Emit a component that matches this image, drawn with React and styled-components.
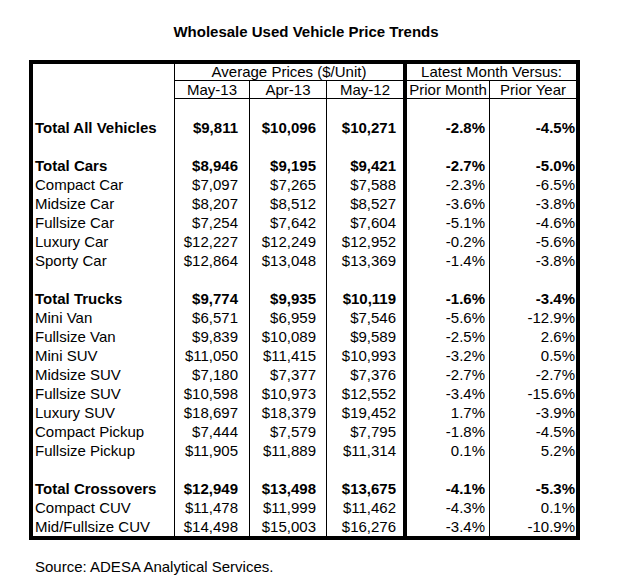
import React from "react";
import styled, { createGlobalStyle } from "styled-components";

const GlobalStyle = createGlobalStyle`
  body {
    margin: 0;
    background: #fff;
    color: #000;
    font-family: "Liberation Sans", Arial, sans-serif;
  }
`;

// column widths include the cell's right rule
const columns = [
  { w: 142, pad: 11, rule: 1 },
  { w: 75, pad: 11, rule: 1 },
  { w: 77, pad: 10, rule: 1 },
  { w: 80, pad: 7, rule: 4 },
  { w: 83, pad: 4, rule: 1 },
  { w: 86, pad: 1, rule: 0 },
];

const rows = [
  null,
  ["Total All Vehicles", "$9,811", "$10,096", "$10,271", "-2.8%", "-4.5%", true],
  null,
  ["Total Cars", "$8,946", "$9,195", "$9,421", "-2.7%", "-5.0%", true],
  ["Compact Car", "$7,097", "$7,265", "$7,588", "-2.3%", "-6.5%"],
  ["Midsize Car", "$8,207", "$8,512", "$8,527", "-3.6%", "-3.8%"],
  ["Fullsize Car", "$7,254", "$7,642", "$7,604", "-5.1%", "-4.6%"],
  ["Luxury Car", "$12,227", "$12,249", "$12,952", "-0.2%", "-5.6%"],
  ["Sporty Car", "$12,864", "$13,048", "$13,369", "-1.4%", "-3.8%"],
  null,
  ["Total Trucks", "$9,774", "$9,935", "$10,119", "-1.6%", "-3.4%", true],
  ["Mini Van", "$6,571", "$6,959", "$7,546", "-5.6%", "-12.9%"],
  ["Fullsize Van", "$9,839", "$10,089", "$9,589", "-2.5%", "2.6%"],
  ["Mini SUV", "$11,050", "$11,415", "$10,993", "-3.2%", "0.5%"],
  ["Midsize SUV", "$7,180", "$7,377", "$7,376", "-2.7%", "-2.7%"],
  ["Fullsize SUV", "$10,598", "$10,973", "$12,552", "-3.4%", "-15.6%"],
  ["Luxury SUV", "$18,697", "$18,379", "$19,452", "1.7%", "-3.9%"],
  ["Compact Pickup", "$7,444", "$7,579", "$7,795", "-1.8%", "-4.5%"],
  ["Fullsize Pickup", "$11,905", "$11,889", "$11,314", "0.1%", "5.2%"],
  null,
  ["Total Crossovers", "$12,949", "$13,498", "$13,675", "-4.1%", "-5.3%", true],
  ["Compact CUV", "$11,478", "$11,999", "$11,462", "-4.3%", "0.1%"],
  ["Mid/Fullsize CUV", "$14,498", "$15,003", "$16,276", "-3.4%", "-10.9%"],
];

const App = () => {
  return (
    <Page>
      <GlobalStyle />
      <Title>Wholesale Used Vehicle Price Trends</Title>
      <Table>
        <colgroup>
          {columns.map((c, i) => (
            <Col key={i} $w={c.w} />
          ))}
        </colgroup>
        <thead>
          <tr>
            <Head rowSpan={2} $rule={1} />
            <Head colSpan={3} $rule={4} $under $h={16}>
              Average Prices ($/Unit)
            </Head>
            <Head colSpan={2} $under $h={16}>
              Latest Month Versus:
            </Head>
          </tr>
          <tr>
            {["May-13", "Apr-13", "May-12", "Prior Month", "Prior Year"].map(
              (label, i) => (
                <Head key={label} $rule={columns[i + 1].rule} $under $h={17}>
                  {label}
                </Head>
              )
            )}
          </tr>
        </thead>
        <tbody>
          {rows.map((row, r) => (
            <tr key={r}>
              {columns.map((c, i) => (
                <Cell
                  key={i}
                  $rule={c.rule}
                  $pad={c.pad}
                  $label={i === 0}
                  $bold={row && row[6]}
                >
                  {row ? row[i] : ""}
                </Cell>
              ))}
            </tr>
          ))}
        </tbody>
      </Table>
      <Source>Source: ADESA Analytical Services.</Source>
    </Page>
  );
};

const Page = styled.section`
  width: 551px;
  margin-left: 29px;
  padding-top: 23px;
`;

const Title = styled.h1`
  margin: 0 0 19px;
  padding-left: 3px;
  font-size: 15px;
  line-height: 18px;
  font-weight: 700;
  text-align: center;
`;

const Table = styled.table`
  table-layout: fixed;
  border-collapse: separate;
  border-spacing: 0;
  width: 551px;
  border: 4px solid #000;
  font-size: 15px;
`;

const Col = styled.col`
  width: ${(p) => p.$w}px;
`;

const Head = styled.th`
  padding: 0;
  height: ${(p) => p.$h || 0}px;
  line-height: ${(p) => p.$h || 16}px;
  font-weight: 400;
  text-align: center;
  white-space: nowrap;
  border-right: ${(p) => p.$rule || 0}px solid #000;
  border-bottom: ${(p) => (p.$under ? 1 : 0)}px solid #000;
`;

const Cell = styled.td`
  height: 19px;
  padding: ${(p) => (p.$label ? "0 0 0 2px" : `0 ${p.$pad}px 0 0`)};
  line-height: 19px;
  white-space: nowrap;
  text-align: ${(p) => (p.$label ? "left" : "right")};
  font-weight: ${(p) => (p.$bold ? 700 : 400)};
  border-right: ${(p) => p.$rule}px solid #000;
`;

const Source = styled.p`
  margin: 18px 0 0 6px;
  font-size: 15px;
  line-height: 18px;
`;

export default App;
